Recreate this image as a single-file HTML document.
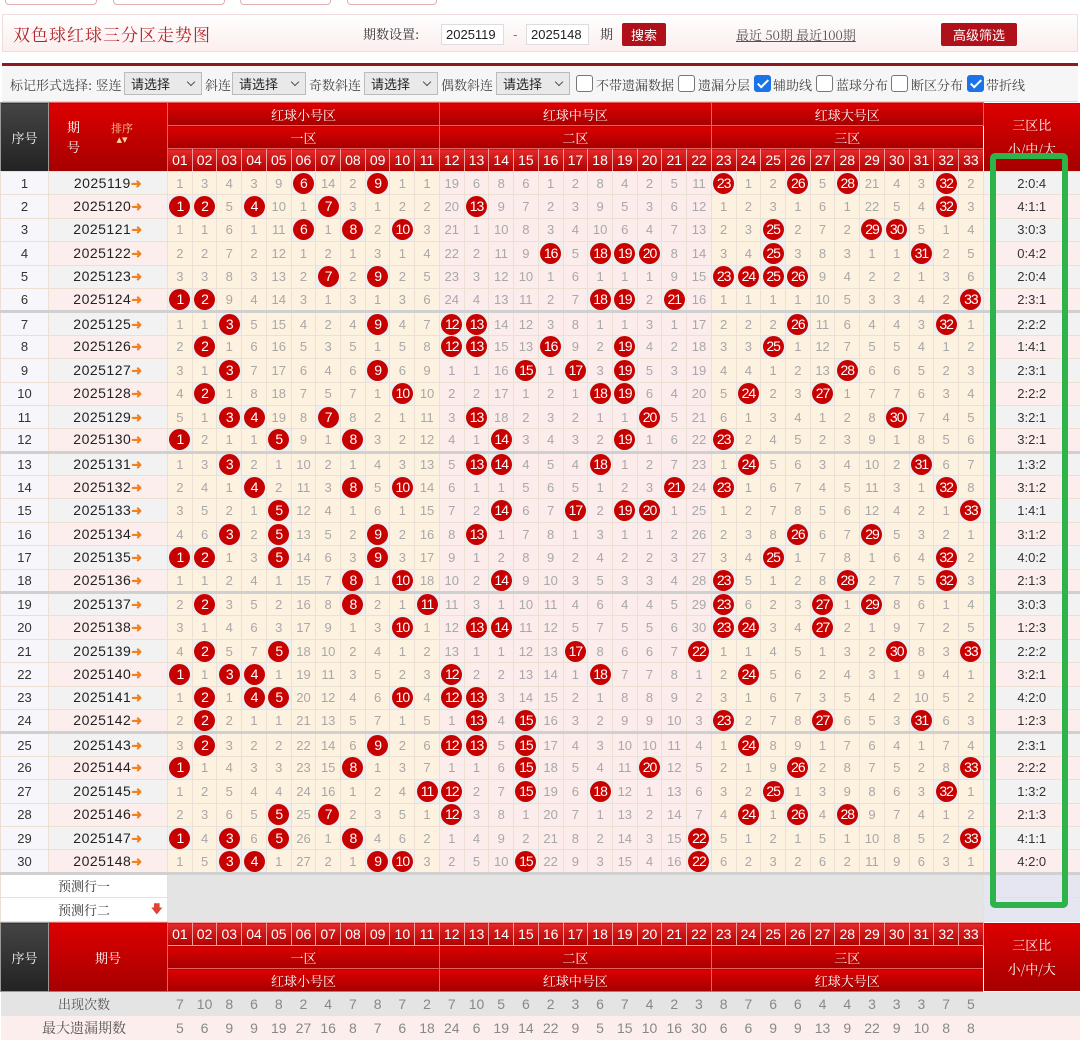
<!DOCTYPE html>
<html><head><meta charset="utf-8">
<style>
*{box-sizing:border-box;margin:0;padding:0}
body{width:1080px;height:1024px;overflow:hidden;background:#fff;font-family:"Liberation Sans","Noto Serif CJK SC","Noto Sans CJK SC",sans-serif;position:relative}
.btns span{position:absolute;top:-8px;height:13px;border:1px solid #e0b0b0;border-radius:4px;background:#fff}
.titlebox{position:absolute;left:2px;top:14px;width:1076px;height:38px;border:1px solid #f0dcdc;background:linear-gradient(#fff,#fbeeee)}
.title{position:absolute;left:10px;top:6px;font-size:17px;color:#b3242a;font-family:"Noto Serif CJK SC",serif;letter-spacing:1px}
.t13{position:absolute;font-size:13px;color:#333;font-family:"Noto Serif CJK SC",serif}
.inp{position:absolute;top:9px;width:63px;height:21px;border:1px solid #ddd;background:#fff;font-size:13px;padding-left:4px;line-height:19px;color:#222}
.rbtn{position:absolute;top:8px;height:23px;background:#b0101a;color:#fff;font-size:13px;text-align:center;line-height:23px;border-radius:2px;font-family:"Noto Sans CJK SC",sans-serif}
.link{position:absolute;left:733px;top:10px;font-size:13px;color:#555;text-decoration:underline;font-family:"Noto Serif CJK SC",serif}
.redline{position:absolute;left:2px;top:63px;width:1076px;height:3px;background:#8e1a1f}
.tool{position:absolute;left:2px;top:66px;width:1076px;height:36px;background:#f6f6f6;border-bottom:1px solid #e8d0d0}
.tool .t13{top:9px;color:#444}
.sel{position:absolute;top:6px;height:23px;border:1px solid #bbb;background:#e9e9e9;font-size:13px;padding-left:6px;line-height:21px;color:#222;font-family:"Noto Sans CJK SC",sans-serif}
.sel:after{content:"";position:absolute;right:7px;top:6px;width:5px;height:5px;border-right:1px solid #555;border-bottom:1px solid #555;transform:rotate(45deg)}
.cb{position:absolute;top:9px;width:17px;height:17px;border:1px solid #777;border-radius:3px;background:#fff}
.cb.on{background:#1a73e8;border-color:#1a73e8}
.cb.on:after{content:"";position:absolute;left:5px;top:1px;width:4px;height:9px;border-right:2px solid #fff;border-bottom:2px solid #fff;transform:rotate(45deg)}
table{position:absolute;left:0;border-collapse:collapse;table-layout:fixed;width:1080px}
td,th{text-align:center;overflow:hidden;white-space:nowrap;padding:0}
.hd{top:102px}
.hd th{color:#fff;font-weight:normal;background:linear-gradient(#d00,#a50000);border:1px solid #e86060;height:23px;font-size:13px;font-family:"Noto Serif CJK SC",serif}
.hd th.n{font-family:"Liberation Sans",sans-serif;font-size:14px;background:linear-gradient(#e52a2a,#b00000);border:1px solid #f4a0a0}
.hd th.dk{background:linear-gradient(#444,#222);border:1px solid #999}
.hd th.rt{border-color:#fff}
.data{top:171px}
.data td{height:23.4px;border:1px solid #ece0d4;font-size:13px;color:#a8a8a8}
.data td:nth-child(n+3){background:#fdf1e0}
.data td:nth-child(n+14):nth-child(-n+24){background:#fcecec}
.data td:first-child{background:#f7f7fb;color:#333;font-size:13px}
.data td:nth-child(2){color:#222;font-size:14px;background:#f2f2f2;letter-spacing:.5px}
.data tr:nth-child(even) td:nth-child(2),.data tr:nth-child(even) td:last-child{background:#fdeeee}
.data td:last-child{background:#f2f2f2;color:#333;font-size:13px}
.data tr.sep td{border-top:3px solid #d0d0d0}
.data td b{display:inline-block;width:21px;height:21px;border-radius:50%;background:#c70000;color:#fff;font-size:14px;line-height:21px;font-weight:normal;letter-spacing:-1px;vertical-align:middle}
.data td.x{background:#efefef!important}
.ar{color:#f08020;font-weight:bold;font-size:13px}
.pr td{background:#e4e4e4!important;height:24px}
.pr td.w{background:#fff!important;color:#333;font-family:"Noto Serif CJK SC",serif;font-size:13px}
.pr td.rt{background:#e6e6f2!important}
.ft{top:922px}
.cnt td{background:#e4e4e4;color:#888;font-size:14px;height:24px;border:none}
.cnt td.lb{font-family:"Noto Serif CJK SC",serif;font-size:13px;color:#555}
.mx td{background:#fdeeee;color:#888;font-size:14px;height:24px;border:none}
.green{position:absolute;left:990px;top:153px;width:78px;height:755px;border:6px solid #2db34a;border-radius:5px}
</style></head><body>
<div class="btns"><span style="left:5px;width:92px"></span><span style="left:113px;width:112px"></span><span style="left:240px;width:91px"></span><span style="left:347px;width:90px"></span></div>
<div class="titlebox">
<div class="title">双色球红球三分区走势图</div>
<div class="t13" style="left:360px;top:9px">期数设置:</div>
<div class="inp" style="left:438px">2025119</div>
<div class="t13" style="left:510px;top:9px">-</div>
<div class="inp" style="left:523px">2025148</div>
<div class="t13" style="left:597px;top:9px">期</div>
<div class="rbtn" style="left:619px;width:44px">搜索</div>
<div class="link">最近 50期 最近100期</div>
<div class="rbtn" style="left:938px;width:76px">高级筛选</div>
</div>
<div class="redline"></div>
<div class="tool">
<div class="t13" style="left:8px">标记形式选择: 竖连</div>
<div class="sel" style="left:122px;width:78px">请选择</div>
<div class="t13" style="left:203px">斜连</div>
<div class="sel" style="left:230px;width:74px">请选择</div>
<div class="t13" style="left:307px">奇数斜连</div>
<div class="sel" style="left:362px;width:74px">请选择</div>
<div class="t13" style="left:439px">偶数斜连</div>
<div class="sel" style="left:494px;width:74px">请选择</div>
<div class="cb" style="left:574px"></div><div class="t13" style="left:594px">不带遗漏数据</div>
<div class="cb" style="left:676px"></div><div class="t13" style="left:696px">遗漏分层</div>
<div class="cb on" style="left:752px"></div><div class="t13" style="left:771px">辅助线</div>
<div class="cb" style="left:814px"></div><div class="t13" style="left:834px">蓝球分布</div>
<div class="cb" style="left:889px"></div><div class="t13" style="left:909px">断区分布</div>
<div class="cb on" style="left:965px"></div><div class="t13" style="left:984px">带折线</div>
</div>

<table class="hd">
<colgroup><col style="width:48px"><col style="width:119px"><col span="33" style="width:24.73px"><col style="width:97px"></colgroup>
<tr><th class="dk" rowspan="3">序号</th><th rowspan="3" style="position:relative"><span style="position:absolute;left:18px;top:14px;line-height:20px">期<br>号</span><span style="position:absolute;left:62px;top:20px;font-size:11px;line-height:11px;color:#ffd0a0">排序<br>▴▾</span></th><th colspan="11">红球小号区</th><th colspan="11">红球中号区</th><th colspan="11">红球大号区</th><th class="rt" rowspan="3" style="line-height:24px">三区比<br>小/中/大</th></tr>
<tr><th colspan="11">一区</th><th colspan="11">二区</th><th colspan="11">三区</th></tr>
<tr><th class="n">01</th><th class="n">02</th><th class="n">03</th><th class="n">04</th><th class="n">05</th><th class="n">06</th><th class="n">07</th><th class="n">08</th><th class="n">09</th><th class="n">10</th><th class="n">11</th><th class="n">12</th><th class="n">13</th><th class="n">14</th><th class="n">15</th><th class="n">16</th><th class="n">17</th><th class="n">18</th><th class="n">19</th><th class="n">20</th><th class="n">21</th><th class="n">22</th><th class="n">23</th><th class="n">24</th><th class="n">25</th><th class="n">26</th><th class="n">27</th><th class="n">28</th><th class="n">29</th><th class="n">30</th><th class="n">31</th><th class="n">32</th><th class="n">33</th></tr>
</table>

<table class="data">
<colgroup><col style="width:48px"><col style="width:119px"><col span="33" style="width:24.73px"><col style="width:97px"></colgroup>
<tr><td>1</td><td>2025119<span class="ar">➜</span></td><td>1</td><td>3</td><td>4</td><td>3</td><td>9</td><td class="x"><b>6</b></td><td>14</td><td>2</td><td class="x"><b>9</b></td><td>1</td><td>1</td><td>19</td><td>6</td><td>8</td><td>6</td><td>1</td><td>2</td><td>8</td><td>4</td><td>2</td><td>5</td><td>11</td><td class="x"><b>23</b></td><td>1</td><td>2</td><td class="x"><b>26</b></td><td>5</td><td class="x"><b>28</b></td><td>21</td><td>4</td><td>3</td><td class="x"><b>32</b></td><td>2</td><td>2:0:4</td></tr>
<tr><td>2</td><td>2025120<span class="ar">➜</span></td><td class="x"><b>1</b></td><td class="x"><b>2</b></td><td>5</td><td class="x"><b>4</b></td><td>10</td><td>1</td><td class="x"><b>7</b></td><td>3</td><td>1</td><td>2</td><td>2</td><td>20</td><td class="x"><b>13</b></td><td>9</td><td>7</td><td>2</td><td>3</td><td>9</td><td>5</td><td>3</td><td>6</td><td>12</td><td>1</td><td>2</td><td>3</td><td>1</td><td>6</td><td>1</td><td>22</td><td>5</td><td>4</td><td class="x"><b>32</b></td><td>3</td><td>4:1:1</td></tr>
<tr><td>3</td><td>2025121<span class="ar">➜</span></td><td>1</td><td>1</td><td>6</td><td>1</td><td>11</td><td class="x"><b>6</b></td><td>1</td><td class="x"><b>8</b></td><td>2</td><td class="x"><b>10</b></td><td>3</td><td>21</td><td>1</td><td>10</td><td>8</td><td>3</td><td>4</td><td>10</td><td>6</td><td>4</td><td>7</td><td>13</td><td>2</td><td>3</td><td class="x"><b>25</b></td><td>2</td><td>7</td><td>2</td><td class="x"><b>29</b></td><td class="x"><b>30</b></td><td>5</td><td>1</td><td>4</td><td>3:0:3</td></tr>
<tr><td>4</td><td>2025122<span class="ar">➜</span></td><td>2</td><td>2</td><td>7</td><td>2</td><td>12</td><td>1</td><td>2</td><td>1</td><td>3</td><td>1</td><td>4</td><td>22</td><td>2</td><td>11</td><td>9</td><td class="x"><b>16</b></td><td>5</td><td class="x"><b>18</b></td><td class="x"><b>19</b></td><td class="x"><b>20</b></td><td>8</td><td>14</td><td>3</td><td>4</td><td class="x"><b>25</b></td><td>3</td><td>8</td><td>3</td><td>1</td><td>1</td><td class="x"><b>31</b></td><td>2</td><td>5</td><td>0:4:2</td></tr>
<tr><td>5</td><td>2025123<span class="ar">➜</span></td><td>3</td><td>3</td><td>8</td><td>3</td><td>13</td><td>2</td><td class="x"><b>7</b></td><td>2</td><td class="x"><b>9</b></td><td>2</td><td>5</td><td>23</td><td>3</td><td>12</td><td>10</td><td>1</td><td>6</td><td>1</td><td>1</td><td>1</td><td>9</td><td>15</td><td class="x"><b>23</b></td><td class="x"><b>24</b></td><td class="x"><b>25</b></td><td class="x"><b>26</b></td><td>9</td><td>4</td><td>2</td><td>2</td><td>1</td><td>3</td><td>6</td><td>2:0:4</td></tr>
<tr><td>6</td><td>2025124<span class="ar">➜</span></td><td class="x"><b>1</b></td><td class="x"><b>2</b></td><td>9</td><td>4</td><td>14</td><td>3</td><td>1</td><td>3</td><td>1</td><td>3</td><td>6</td><td>24</td><td>4</td><td>13</td><td>11</td><td>2</td><td>7</td><td class="x"><b>18</b></td><td class="x"><b>19</b></td><td>2</td><td class="x"><b>21</b></td><td>16</td><td>1</td><td>1</td><td>1</td><td>1</td><td>10</td><td>5</td><td>3</td><td>3</td><td>4</td><td>2</td><td class="x"><b>33</b></td><td>2:3:1</td></tr>
<tr class="sep"><td>7</td><td>2025125<span class="ar">➜</span></td><td>1</td><td>1</td><td class="x"><b>3</b></td><td>5</td><td>15</td><td>4</td><td>2</td><td>4</td><td class="x"><b>9</b></td><td>4</td><td>7</td><td class="x"><b>12</b></td><td class="x"><b>13</b></td><td>14</td><td>12</td><td>3</td><td>8</td><td>1</td><td>1</td><td>3</td><td>1</td><td>17</td><td>2</td><td>2</td><td>2</td><td class="x"><b>26</b></td><td>11</td><td>6</td><td>4</td><td>4</td><td>3</td><td class="x"><b>32</b></td><td>1</td><td>2:2:2</td></tr>
<tr><td>8</td><td>2025126<span class="ar">➜</span></td><td>2</td><td class="x"><b>2</b></td><td>1</td><td>6</td><td>16</td><td>5</td><td>3</td><td>5</td><td>1</td><td>5</td><td>8</td><td class="x"><b>12</b></td><td class="x"><b>13</b></td><td>15</td><td>13</td><td class="x"><b>16</b></td><td>9</td><td>2</td><td class="x"><b>19</b></td><td>4</td><td>2</td><td>18</td><td>3</td><td>3</td><td class="x"><b>25</b></td><td>1</td><td>12</td><td>7</td><td>5</td><td>5</td><td>4</td><td>1</td><td>2</td><td>1:4:1</td></tr>
<tr><td>9</td><td>2025127<span class="ar">➜</span></td><td>3</td><td>1</td><td class="x"><b>3</b></td><td>7</td><td>17</td><td>6</td><td>4</td><td>6</td><td class="x"><b>9</b></td><td>6</td><td>9</td><td>1</td><td>1</td><td>16</td><td class="x"><b>15</b></td><td>1</td><td class="x"><b>17</b></td><td>3</td><td class="x"><b>19</b></td><td>5</td><td>3</td><td>19</td><td>4</td><td>4</td><td>1</td><td>2</td><td>13</td><td class="x"><b>28</b></td><td>6</td><td>6</td><td>5</td><td>2</td><td>3</td><td>2:3:1</td></tr>
<tr><td>10</td><td>2025128<span class="ar">➜</span></td><td>4</td><td class="x"><b>2</b></td><td>1</td><td>8</td><td>18</td><td>7</td><td>5</td><td>7</td><td>1</td><td class="x"><b>10</b></td><td>10</td><td>2</td><td>2</td><td>17</td><td>1</td><td>2</td><td>1</td><td class="x"><b>18</b></td><td class="x"><b>19</b></td><td>6</td><td>4</td><td>20</td><td>5</td><td class="x"><b>24</b></td><td>2</td><td>3</td><td class="x"><b>27</b></td><td>1</td><td>7</td><td>7</td><td>6</td><td>3</td><td>4</td><td>2:2:2</td></tr>
<tr><td>11</td><td>2025129<span class="ar">➜</span></td><td>5</td><td>1</td><td class="x"><b>3</b></td><td class="x"><b>4</b></td><td>19</td><td>8</td><td class="x"><b>7</b></td><td>8</td><td>2</td><td>1</td><td>11</td><td>3</td><td class="x"><b>13</b></td><td>18</td><td>2</td><td>3</td><td>2</td><td>1</td><td>1</td><td class="x"><b>20</b></td><td>5</td><td>21</td><td>6</td><td>1</td><td>3</td><td>4</td><td>1</td><td>2</td><td>8</td><td class="x"><b>30</b></td><td>7</td><td>4</td><td>5</td><td>3:2:1</td></tr>
<tr><td>12</td><td>2025130<span class="ar">➜</span></td><td class="x"><b>1</b></td><td>2</td><td>1</td><td>1</td><td class="x"><b>5</b></td><td>9</td><td>1</td><td class="x"><b>8</b></td><td>3</td><td>2</td><td>12</td><td>4</td><td>1</td><td class="x"><b>14</b></td><td>3</td><td>4</td><td>3</td><td>2</td><td class="x"><b>19</b></td><td>1</td><td>6</td><td>22</td><td class="x"><b>23</b></td><td>2</td><td>4</td><td>5</td><td>2</td><td>3</td><td>9</td><td>1</td><td>8</td><td>5</td><td>6</td><td>3:2:1</td></tr>
<tr class="sep"><td>13</td><td>2025131<span class="ar">➜</span></td><td>1</td><td>3</td><td class="x"><b>3</b></td><td>2</td><td>1</td><td>10</td><td>2</td><td>1</td><td>4</td><td>3</td><td>13</td><td>5</td><td class="x"><b>13</b></td><td class="x"><b>14</b></td><td>4</td><td>5</td><td>4</td><td class="x"><b>18</b></td><td>1</td><td>2</td><td>7</td><td>23</td><td>1</td><td class="x"><b>24</b></td><td>5</td><td>6</td><td>3</td><td>4</td><td>10</td><td>2</td><td class="x"><b>31</b></td><td>6</td><td>7</td><td>1:3:2</td></tr>
<tr><td>14</td><td>2025132<span class="ar">➜</span></td><td>2</td><td>4</td><td>1</td><td class="x"><b>4</b></td><td>2</td><td>11</td><td>3</td><td class="x"><b>8</b></td><td>5</td><td class="x"><b>10</b></td><td>14</td><td>6</td><td>1</td><td>1</td><td>5</td><td>6</td><td>5</td><td>1</td><td>2</td><td>3</td><td class="x"><b>21</b></td><td>24</td><td class="x"><b>23</b></td><td>1</td><td>6</td><td>7</td><td>4</td><td>5</td><td>11</td><td>3</td><td>1</td><td class="x"><b>32</b></td><td>8</td><td>3:1:2</td></tr>
<tr><td>15</td><td>2025133<span class="ar">➜</span></td><td>3</td><td>5</td><td>2</td><td>1</td><td class="x"><b>5</b></td><td>12</td><td>4</td><td>1</td><td>6</td><td>1</td><td>15</td><td>7</td><td>2</td><td class="x"><b>14</b></td><td>6</td><td>7</td><td class="x"><b>17</b></td><td>2</td><td class="x"><b>19</b></td><td class="x"><b>20</b></td><td>1</td><td>25</td><td>1</td><td>2</td><td>7</td><td>8</td><td>5</td><td>6</td><td>12</td><td>4</td><td>2</td><td>1</td><td class="x"><b>33</b></td><td>1:4:1</td></tr>
<tr><td>16</td><td>2025134<span class="ar">➜</span></td><td>4</td><td>6</td><td class="x"><b>3</b></td><td>2</td><td class="x"><b>5</b></td><td>13</td><td>5</td><td>2</td><td class="x"><b>9</b></td><td>2</td><td>16</td><td>8</td><td class="x"><b>13</b></td><td>1</td><td>7</td><td>8</td><td>1</td><td>3</td><td>1</td><td>1</td><td>2</td><td>26</td><td>2</td><td>3</td><td>8</td><td class="x"><b>26</b></td><td>6</td><td>7</td><td class="x"><b>29</b></td><td>5</td><td>3</td><td>2</td><td>1</td><td>3:1:2</td></tr>
<tr><td>17</td><td>2025135<span class="ar">➜</span></td><td class="x"><b>1</b></td><td class="x"><b>2</b></td><td>1</td><td>3</td><td class="x"><b>5</b></td><td>14</td><td>6</td><td>3</td><td class="x"><b>9</b></td><td>3</td><td>17</td><td>9</td><td>1</td><td>2</td><td>8</td><td>9</td><td>2</td><td>4</td><td>2</td><td>2</td><td>3</td><td>27</td><td>3</td><td>4</td><td class="x"><b>25</b></td><td>1</td><td>7</td><td>8</td><td>1</td><td>6</td><td>4</td><td class="x"><b>32</b></td><td>2</td><td>4:0:2</td></tr>
<tr><td>18</td><td>2025136<span class="ar">➜</span></td><td>1</td><td>1</td><td>2</td><td>4</td><td>1</td><td>15</td><td>7</td><td class="x"><b>8</b></td><td>1</td><td class="x"><b>10</b></td><td>18</td><td>10</td><td>2</td><td class="x"><b>14</b></td><td>9</td><td>10</td><td>3</td><td>5</td><td>3</td><td>3</td><td>4</td><td>28</td><td class="x"><b>23</b></td><td>5</td><td>1</td><td>2</td><td>8</td><td class="x"><b>28</b></td><td>2</td><td>7</td><td>5</td><td class="x"><b>32</b></td><td>3</td><td>2:1:3</td></tr>
<tr class="sep"><td>19</td><td>2025137<span class="ar">➜</span></td><td>2</td><td class="x"><b>2</b></td><td>3</td><td>5</td><td>2</td><td>16</td><td>8</td><td class="x"><b>8</b></td><td>2</td><td>1</td><td class="x"><b>11</b></td><td>11</td><td>3</td><td>1</td><td>10</td><td>11</td><td>4</td><td>6</td><td>4</td><td>4</td><td>5</td><td>29</td><td class="x"><b>23</b></td><td>6</td><td>2</td><td>3</td><td class="x"><b>27</b></td><td>1</td><td class="x"><b>29</b></td><td>8</td><td>6</td><td>1</td><td>4</td><td>3:0:3</td></tr>
<tr><td>20</td><td>2025138<span class="ar">➜</span></td><td>3</td><td>1</td><td>4</td><td>6</td><td>3</td><td>17</td><td>9</td><td>1</td><td>3</td><td class="x"><b>10</b></td><td>1</td><td>12</td><td class="x"><b>13</b></td><td class="x"><b>14</b></td><td>11</td><td>12</td><td>5</td><td>7</td><td>5</td><td>5</td><td>6</td><td>30</td><td class="x"><b>23</b></td><td class="x"><b>24</b></td><td>3</td><td>4</td><td class="x"><b>27</b></td><td>2</td><td>1</td><td>9</td><td>7</td><td>2</td><td>5</td><td>1:2:3</td></tr>
<tr><td>21</td><td>2025139<span class="ar">➜</span></td><td>4</td><td class="x"><b>2</b></td><td>5</td><td>7</td><td class="x"><b>5</b></td><td>18</td><td>10</td><td>2</td><td>4</td><td>1</td><td>2</td><td>13</td><td>1</td><td>1</td><td>12</td><td>13</td><td class="x"><b>17</b></td><td>8</td><td>6</td><td>6</td><td>7</td><td class="x"><b>22</b></td><td>1</td><td>1</td><td>4</td><td>5</td><td>1</td><td>3</td><td>2</td><td class="x"><b>30</b></td><td>8</td><td>3</td><td class="x"><b>33</b></td><td>2:2:2</td></tr>
<tr><td>22</td><td>2025140<span class="ar">➜</span></td><td class="x"><b>1</b></td><td>1</td><td class="x"><b>3</b></td><td class="x"><b>4</b></td><td>1</td><td>19</td><td>11</td><td>3</td><td>5</td><td>2</td><td>3</td><td class="x"><b>12</b></td><td>2</td><td>2</td><td>13</td><td>14</td><td>1</td><td class="x"><b>18</b></td><td>7</td><td>7</td><td>8</td><td>1</td><td>2</td><td class="x"><b>24</b></td><td>5</td><td>6</td><td>2</td><td>4</td><td>3</td><td>1</td><td>9</td><td>4</td><td>1</td><td>3:2:1</td></tr>
<tr><td>23</td><td>2025141<span class="ar">➜</span></td><td>1</td><td class="x"><b>2</b></td><td>1</td><td class="x"><b>4</b></td><td class="x"><b>5</b></td><td>20</td><td>12</td><td>4</td><td>6</td><td class="x"><b>10</b></td><td>4</td><td class="x"><b>12</b></td><td class="x"><b>13</b></td><td>3</td><td>14</td><td>15</td><td>2</td><td>1</td><td>8</td><td>8</td><td>9</td><td>2</td><td>3</td><td>1</td><td>6</td><td>7</td><td>3</td><td>5</td><td>4</td><td>2</td><td>10</td><td>5</td><td>2</td><td>4:2:0</td></tr>
<tr><td>24</td><td>2025142<span class="ar">➜</span></td><td>2</td><td class="x"><b>2</b></td><td>2</td><td>1</td><td>1</td><td>21</td><td>13</td><td>5</td><td>7</td><td>1</td><td>5</td><td>1</td><td class="x"><b>13</b></td><td>4</td><td class="x"><b>15</b></td><td>16</td><td>3</td><td>2</td><td>9</td><td>9</td><td>10</td><td>3</td><td class="x"><b>23</b></td><td>2</td><td>7</td><td>8</td><td class="x"><b>27</b></td><td>6</td><td>5</td><td>3</td><td class="x"><b>31</b></td><td>6</td><td>3</td><td>1:2:3</td></tr>
<tr class="sep"><td>25</td><td>2025143<span class="ar">➜</span></td><td>3</td><td class="x"><b>2</b></td><td>3</td><td>2</td><td>2</td><td>22</td><td>14</td><td>6</td><td class="x"><b>9</b></td><td>2</td><td>6</td><td class="x"><b>12</b></td><td class="x"><b>13</b></td><td>5</td><td class="x"><b>15</b></td><td>17</td><td>4</td><td>3</td><td>10</td><td>10</td><td>11</td><td>4</td><td>1</td><td class="x"><b>24</b></td><td>8</td><td>9</td><td>1</td><td>7</td><td>6</td><td>4</td><td>1</td><td>7</td><td>4</td><td>2:3:1</td></tr>
<tr><td>26</td><td>2025144<span class="ar">➜</span></td><td class="x"><b>1</b></td><td>1</td><td>4</td><td>3</td><td>3</td><td>23</td><td>15</td><td class="x"><b>8</b></td><td>1</td><td>3</td><td>7</td><td>1</td><td>1</td><td>6</td><td class="x"><b>15</b></td><td>18</td><td>5</td><td>4</td><td>11</td><td class="x"><b>20</b></td><td>12</td><td>5</td><td>2</td><td>1</td><td>9</td><td class="x"><b>26</b></td><td>2</td><td>8</td><td>7</td><td>5</td><td>2</td><td>8</td><td class="x"><b>33</b></td><td>2:2:2</td></tr>
<tr><td>27</td><td>2025145<span class="ar">➜</span></td><td>1</td><td>2</td><td>5</td><td>4</td><td>4</td><td>24</td><td>16</td><td>1</td><td>2</td><td>4</td><td class="x"><b>11</b></td><td class="x"><b>12</b></td><td>2</td><td>7</td><td class="x"><b>15</b></td><td>19</td><td>6</td><td class="x"><b>18</b></td><td>12</td><td>1</td><td>13</td><td>6</td><td>3</td><td>2</td><td class="x"><b>25</b></td><td>1</td><td>3</td><td>9</td><td>8</td><td>6</td><td>3</td><td class="x"><b>32</b></td><td>1</td><td>1:3:2</td></tr>
<tr><td>28</td><td>2025146<span class="ar">➜</span></td><td>2</td><td>3</td><td>6</td><td>5</td><td class="x"><b>5</b></td><td>25</td><td class="x"><b>7</b></td><td>2</td><td>3</td><td>5</td><td>1</td><td class="x"><b>12</b></td><td>3</td><td>8</td><td>1</td><td>20</td><td>7</td><td>1</td><td>13</td><td>2</td><td>14</td><td>7</td><td>4</td><td class="x"><b>24</b></td><td>1</td><td class="x"><b>26</b></td><td>4</td><td class="x"><b>28</b></td><td>9</td><td>7</td><td>4</td><td>1</td><td>2</td><td>2:1:3</td></tr>
<tr><td>29</td><td>2025147<span class="ar">➜</span></td><td class="x"><b>1</b></td><td>4</td><td class="x"><b>3</b></td><td>6</td><td class="x"><b>5</b></td><td>26</td><td>1</td><td class="x"><b>8</b></td><td>4</td><td>6</td><td>2</td><td>1</td><td>4</td><td>9</td><td>2</td><td>21</td><td>8</td><td>2</td><td>14</td><td>3</td><td>15</td><td class="x"><b>22</b></td><td>5</td><td>1</td><td>2</td><td>1</td><td>5</td><td>1</td><td>10</td><td>8</td><td>5</td><td>2</td><td class="x"><b>33</b></td><td>4:1:1</td></tr>
<tr><td>30</td><td>2025148<span class="ar">➜</span></td><td>1</td><td>5</td><td class="x"><b>3</b></td><td class="x"><b>4</b></td><td>1</td><td>27</td><td>2</td><td>1</td><td class="x"><b>9</b></td><td class="x"><b>10</b></td><td>3</td><td>2</td><td>5</td><td>10</td><td class="x"><b>15</b></td><td>22</td><td>9</td><td>3</td><td>15</td><td>4</td><td>16</td><td class="x"><b>22</b></td><td>6</td><td>2</td><td>3</td><td>2</td><td>6</td><td>2</td><td>11</td><td>9</td><td>6</td><td>3</td><td>1</td><td>4:2:0</td></tr>
<tr class="pr sep"><td class="w" colspan="2">预测行一</td><td colspan="33"></td><td class="rt"></td></tr>
<tr class="pr"><td class="w" colspan="2" style="position:relative">预测行二<span style="position:absolute;right:4px;top:2px;color:#d43;font-size:12px">🡇</span></td><td colspan="33"></td><td class="rt"></td></tr>
</table>

<table class="hd ft">
<colgroup><col style="width:48px"><col style="width:119px"><col span="33" style="width:24.73px"><col style="width:97px"></colgroup>
<tr><th class="dk" rowspan="3">序号</th><th rowspan="3">期号</th><th class="n">01</th><th class="n">02</th><th class="n">03</th><th class="n">04</th><th class="n">05</th><th class="n">06</th><th class="n">07</th><th class="n">08</th><th class="n">09</th><th class="n">10</th><th class="n">11</th><th class="n">12</th><th class="n">13</th><th class="n">14</th><th class="n">15</th><th class="n">16</th><th class="n">17</th><th class="n">18</th><th class="n">19</th><th class="n">20</th><th class="n">21</th><th class="n">22</th><th class="n">23</th><th class="n">24</th><th class="n">25</th><th class="n">26</th><th class="n">27</th><th class="n">28</th><th class="n">29</th><th class="n">30</th><th class="n">31</th><th class="n">32</th><th class="n">33</th><th class="rt" rowspan="3" style="line-height:24px">三区比<br>小/中/大</th></tr>
<tr><th colspan="11">一区</th><th colspan="11">二区</th><th colspan="11">三区</th></tr>
<tr><th colspan="11">红球小号区</th><th colspan="11">红球中号区</th><th colspan="11">红球大号区</th></tr>
<tr class="cnt"><td class="lb" colspan="2">出现次数</td><td>7</td><td>10</td><td>8</td><td>6</td><td>8</td><td>2</td><td>4</td><td>7</td><td>8</td><td>7</td><td>2</td><td>7</td><td>10</td><td>5</td><td>6</td><td>2</td><td>3</td><td>6</td><td>7</td><td>4</td><td>2</td><td>3</td><td>8</td><td>7</td><td>6</td><td>6</td><td>4</td><td>4</td><td>3</td><td>3</td><td>3</td><td>7</td><td>5</td><td></td></tr>
<tr class="mx"><td class="lb" colspan="2" style="color:#555">最大遗漏期数</td><td>5</td><td>6</td><td>9</td><td>9</td><td>19</td><td>27</td><td>16</td><td>8</td><td>7</td><td>6</td><td>18</td><td>24</td><td>6</td><td>19</td><td>14</td><td>22</td><td>9</td><td>5</td><td>15</td><td>10</td><td>16</td><td>30</td><td>6</td><td>6</td><td>9</td><td>9</td><td>13</td><td>9</td><td>22</td><td>9</td><td>10</td><td>8</td><td>8</td><td></td></tr>
</table>
<div class="green"></div>
</body></html>
